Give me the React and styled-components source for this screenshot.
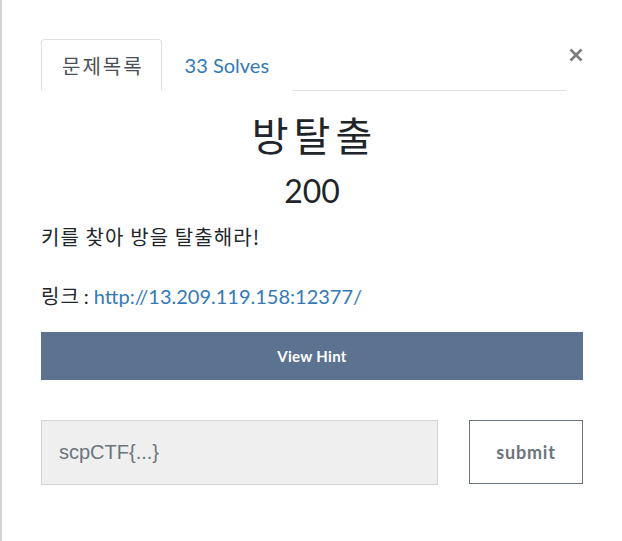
import React from "react";
import styled, { createGlobalStyle } from "styled-components";

const Global = createGlobalStyle`
  html, body { margin: 0; padding: 0; background: #fff; }
  body { font-family: Lato, "Noto Sans CJK KR", sans-serif; }
  * { box-sizing: border-box; }
`;

const Modal = styled.div`
  min-height: 541px;
  border-left: 2px solid #d2d2d2;
  padding: 39px 39px 0 39px;
  font-family: Lato, "Noto Sans CJK KR", sans-serif;
  color: #212529;
`;

const Header = styled.div`
  display: flex;
  align-items: flex-start;
`;

const TabNav = styled.div`
  display: flex;
  width: 525px;
  border-bottom: 1px solid #dee2e6;
`;

const Tab = styled.div`
  height: 52px;
  display: flex;
  align-items: center;
  padding: ${(p) => (p.$active ? "0 17px 0 20px" : "0 22px")};
  font-size: 20px;
  margin-bottom: -1px;
  border: 1px solid ${(p) => (p.$active ? "#dee2e6" : "transparent")};
  border-bottom-color: ${(p) => (p.$active ? "#fff" : "transparent")};
  border-radius: 4px 4px 0 0;
  background: #fff;
  color: ${(p) => (p.$active ? "#495057" : "#337ab7")};
`;

const Ko = styled.span`
  font-family: "Noto Sans CJK KR", sans-serif;
  letter-spacing: ${(p) => p.$ls || 1}px;
`;

const Close = styled.button`
  margin: 9px 0 0 auto;
  width: 14px;
  height: 14px;
  padding: 0;
  border: 0;
  background: none;
  display: flex;
`;

const Title = styled.h1`
  margin: 19px 0 0;
  padding-left: 5px;
  text-align: center;
  font-size: 40px;
  line-height: 48px;
  font-weight: 400;
  letter-spacing: 5px;
  font-family: "Noto Sans CJK KR", sans-serif;
  color: #212529;
`;

const Points = styled.h2`
  margin: 14px 0 0;
  text-align: center;
  font-size: 32px;
  line-height: 38px;
  font-weight: 400;
  font-family: Lato, sans-serif;
  color: #212529;
`;

const Para = styled.p`
  margin: ${(p) => p.$top}px 0 0;
  font-size: 20px;
  line-height: 30px;
  font-family: Lato, "Noto Sans CJK KR", sans-serif;
  color: #212529;
`;

const Colon = styled.span`
  margin: 0 5px 0 4px;
`;

const Link = styled.a`
  color: #337ab7;
  text-decoration: none;
`;

const HintButton = styled.button`
  display: block;
  width: 100%;
  height: 48px;
  margin-top: 21px;
  border: 0;
  background: #5b7290;
  color: #fff;
  font-family: Lato, sans-serif;
  font-weight: 700;
  font-size: 15px;
  letter-spacing: 0.3px;
`;

const SubmitRow = styled.div`
  display: flex;
  justify-content: space-between;
  align-items: flex-start;
  margin-top: 40px;
`;

const FlagInput = styled.input`
  width: 397px;
  height: 65px;
  border: 1px solid #ced4da;
  background: #efefef;
  padding: 0 17px;
  font-family: "Liberation Sans", Arial, sans-serif;
  font-size: 20px;
  color: #495057;
  outline: none;
  &::placeholder { color: #6c757d; }
`;

const SubmitButton = styled.button`
  width: 114px;
  height: 64px;
  border: 1px solid #6c757d;
  background: #fff;
  color: #6c757d;
  font-family: Lato, sans-serif;
  font-weight: 700;
  font-size: 18px;
  letter-spacing: 0.8px;
`;

export default function App() {
  return (
    <>
      <Global />
      <Modal>
        <Header>
          <TabNav>
            <Tab $active><Ko $ls={2}>문제목록</Ko></Tab>
            <Tab>33 Solves</Tab>
          </TabNav>
          <Close aria-label="close">
            <svg width="14" height="14" viewBox="0 0 14 14">
              <path d="M1.5 1.5 L12.5 12.5 M12.5 1.5 L1.5 12.5" stroke="#7b7b7b" strokeWidth="2.6" strokeLinecap="butt" />
            </svg>
          </Close>
        </Header>
        <Title>방탈출</Title>
        <Points>200</Points>
        <Para $top={12}><Ko $ls={1.1}>키를 찾아 방을 탈출해라!</Ko></Para>
        <Para $top={29}>
          <Ko $ls={1}>링크</Ko><Colon>:</Colon><Link href="#">http://13.209.119.158:12377/</Link>
        </Para>
        <HintButton>View Hint</HintButton>
        <SubmitRow>
          <FlagInput placeholder="scpCTF{...}" />
          <SubmitButton>submit</SubmitButton>
        </SubmitRow>
      </Modal>
    </>
  );
}
